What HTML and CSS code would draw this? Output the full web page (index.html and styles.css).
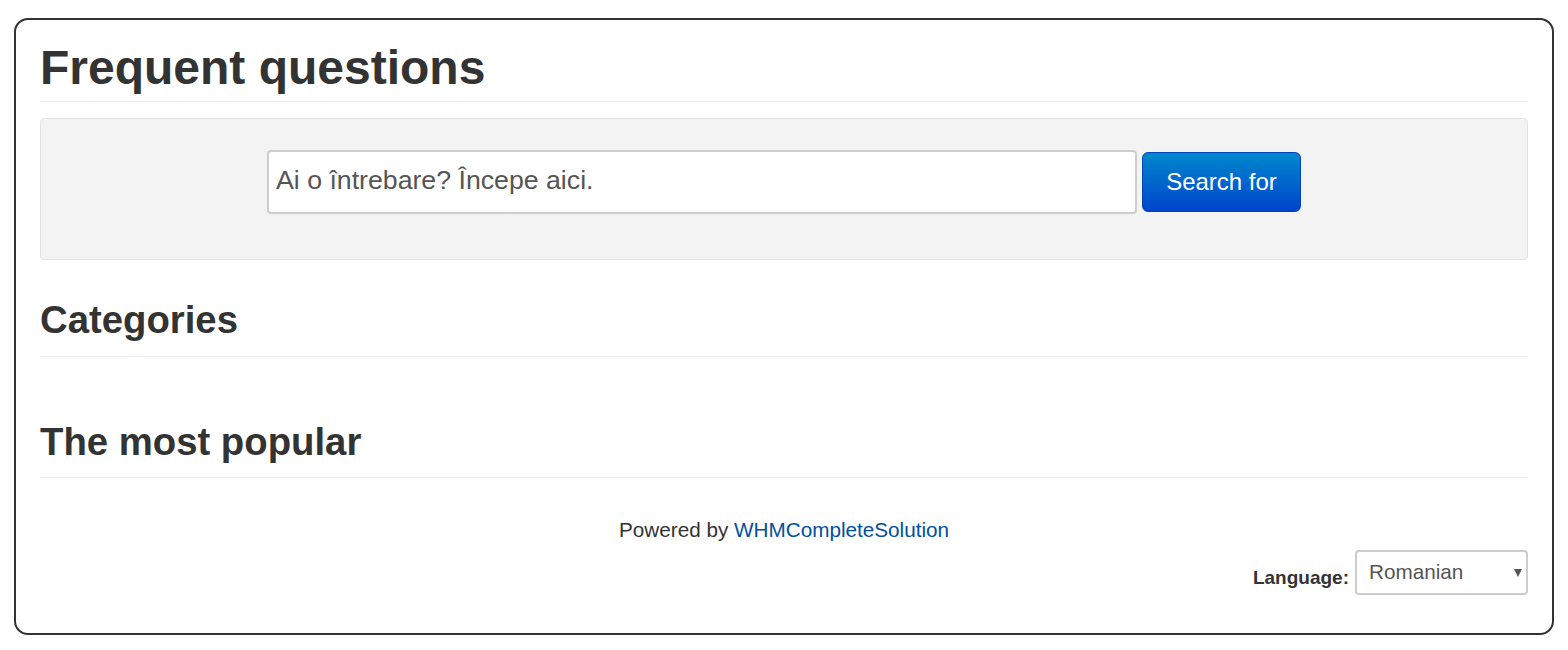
FILE: index.html
```html
<!DOCTYPE html>
<html lang="ro">
<head>
    <meta charset="UTF-8">
    <meta name="viewport" content="width=device-width, initial-scale=1.0">
    <title>Frequent questions</title>
    <link rel="stylesheet" href="styles.css">
</head>
<body>
    <div class="kb">
        <h1 class="kb-title">Frequent questions</h1>
        <form class="kb-search">
            <input type="text" class="search-query" placeholder="Ai o întrebare? Începe aici.">
            <button type="submit" class="btn-primary">Search for</button>
        </form>
        <h2 class="kb-section first">Categories</h2>
        <!-- lista de categorii goala -->
        <h2 class="kb-section">The most popular</h2>
        <p class="powered">Powered by <a href="#">WHMCompleteSolution</a></p>
        <div class="lang">
            <label for="lang">Language:</label>
            <div class="select-wrap">
                <select id="lang">
                    <option>Romanian</option>
                    <option>English</option>
                </select>
            </div>
        </div>
    </div>
</body>
</html>
```

FILE: styles.css
```css
body {
    margin: 0;
    padding: 18px 14px 16px;
    font-family: "Liberation Sans", Arial, sans-serif;
    color: #333;
    background: #fff;
}
.kb {
    border: 2px solid #333;
    border-radius: 14px;
    padding: 20px 24px 38px;
}
.kb-title {
    margin: 0;
    font-size: 48px;
    line-height: 56px;
    font-weight: bold;
    padding-bottom: 5px;
    border-bottom: 1px solid #eee;
}
.kb-search {
    margin: 16px 0 0;
    display: flex;
    justify-content: center;
    align-items: center;
    gap: 5px;
    padding: 31px 0 45px;
    background-color: #f3f3f3;
    border: 1px solid #e3e3e3;
    border-radius: 4px;
}
.search-query {
    box-sizing: border-box;
    width: 870px;
    height: 64px;
    padding: 0 7px 3px;
    border: 2px solid #cdcdcd;
    border-radius: 4px;
    font-family: inherit;
    font-size: 26.7px;
    color: #555;
    background: #fff;
    outline: none;
}
.search-query::placeholder {
    color: #555;
}
.btn-primary {
    box-sizing: border-box;
    width: 159px;
    height: 60px;
    border: 1px solid #0046b8;
    border-radius: 6px;
    background: linear-gradient(to bottom, #0088cc, #0044cc);
    color: #fff;
    font-family: inherit;
    font-size: 24px;
    cursor: pointer;
}
.kb-section {
    margin: 65px 0 0;
    font-size: 38.3px;
    line-height: 40px;
    font-weight: bold;
    padding-bottom: 15px;
    border-bottom: 1px solid #eee;
}
.kb-section.first {
    margin-top: 40px;
    padding-bottom: 16px;
}
.powered {
    margin: 38px 0 0;
    text-align: center;
    font-size: 20.7px;
    line-height: 28px;
}
.powered a {
    color: #0050a0;
    text-decoration: none;
}
.lang {
    margin-top: 6px;
    display: flex;
    justify-content: flex-end;
    align-items: flex-end;
    gap: 6px;
}
.lang label {
    font-size: 19px;
    font-weight: bold;
    line-height: 26px;
    padding-bottom: 4px;
}
.select-wrap {
    position: relative;
}
.select-wrap::after {
    content: "";
    position: absolute;
    right: 6px;
    top: 19px;
    border-left: 4px solid transparent;
    border-right: 4px solid transparent;
    border-top: 8px solid #555;
    pointer-events: none;
}
.select-wrap select {
    appearance: none;
    -webkit-appearance: none;
    box-sizing: border-box;
    width: 173px;
    height: 45px;
    padding: 0 12px 2px;
    border: 2px solid #ccc;
    border-radius: 4px;
    background: #fff;
    font-family: inherit;
    font-size: 20.7px;
    color: #555;
}
```
